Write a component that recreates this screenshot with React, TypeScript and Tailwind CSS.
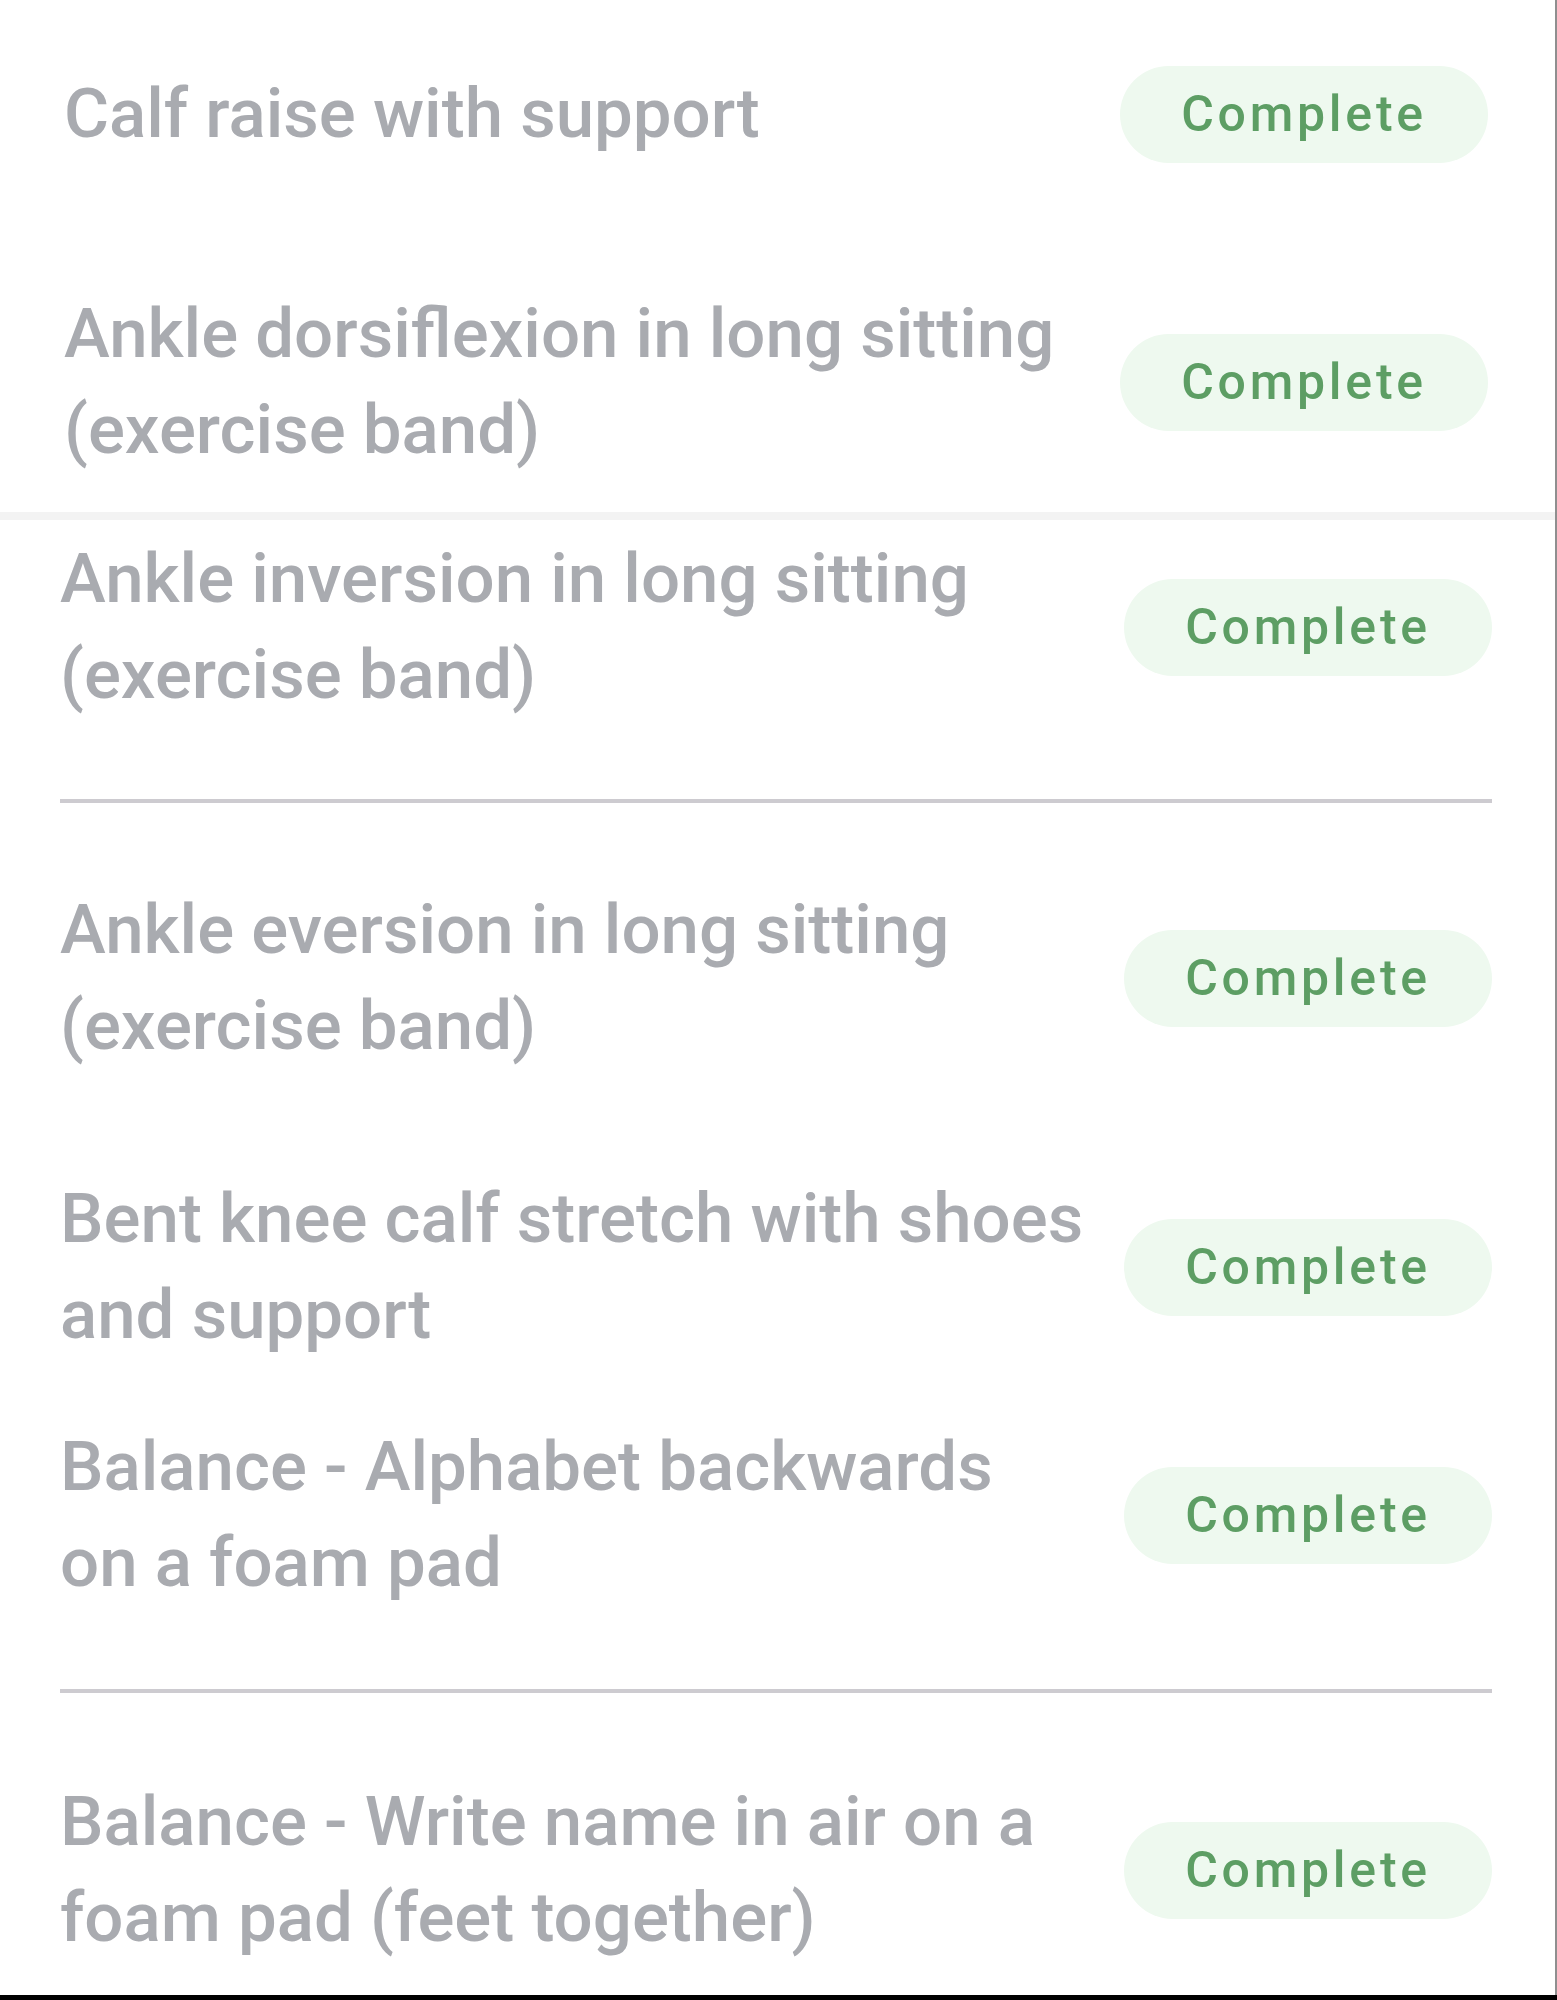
import React from "react";

const Badge = () => (
  <div className="flex h-[97px] w-[368px] shrink-0 items-center justify-center rounded-full bg-[#eef9ef] text-[50px] font-medium tracking-[0.075em] text-[#5d9e64]">
    Complete
  </div>
);

const Row = ({ title, className }: { title: string[]; className?: string }) => (
  <div className={`flex items-center justify-between ${className ?? ""}`}>
    <div className="text-[69px] font-medium leading-[96px] text-[#a9abb0]">
      {title.map((line) => (
        <div key={line}>{line}</div>
      ))}
    </div>
    <Badge />
  </div>
);

const Divider = ({ className }: { className?: string }) => (
  <div className={`h-[4px] bg-[#cdcbd0] ${className ?? ""}`} />
);

export default function App() {
  return (
    <div
      className="flex h-[2000px] w-[1557px] flex-col bg-white"
      style={{ fontFamily: "Roboto, 'Noto Sans', sans-serif" }}
    >
      <div className="flex flex-1 flex-col border-r-2 border-[#8f8f8f]">
        {/* first card */}
        <div className="flex flex-col pl-[64px] pr-[67px] pt-[64px]">
          <Row title={["Calf raise with support"]} className="h-[100px]" />
          <Row
            title={["Ankle dorsiflexion in long sitting", "(exercise band)"]}
            className="mt-[122px]"
          />
        </div>
        <div className="mt-[34px] h-[8px] bg-[#f3f3f3]" />

        {/* second card */}
        <div className="flex flex-col pl-[60px] pr-[63px]">
          <Row
            title={["Ankle inversion in long sitting", "(exercise band)"]}
            className="mt-[11px]"
          />
          <Divider className="mt-[76px]" />
          <Row
            title={["Ankle eversion in long sitting", "(exercise band)"]}
            className="mt-[79px]"
          />
          <Row
            title={["Bent knee calf stretch with shoes", "and support"]}
            className="mt-[97px]"
          />
          <Row
            title={["Balance - Alphabet backwards", "on a foam pad"]}
            className="mt-[56px]"
          />
          <Divider className="mt-[78px]" />
          <Row
            title={["Balance - Write name in air on a", "foam pad (feet together)"]}
            className="mt-[81px]"
          />
        </div>
      </div>
      <div className="h-[5px] bg-black" />
    </div>
  );
}
